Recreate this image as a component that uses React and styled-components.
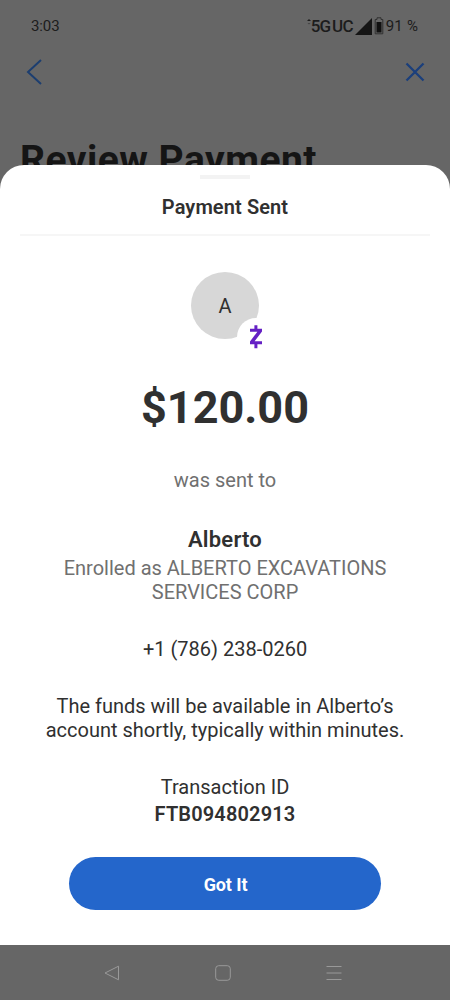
import React from "react";
import styled, { createGlobalStyle } from "styled-components";

const GlobalStyle = createGlobalStyle`
  html, body {
    margin: 0;
    padding: 0;
    background: #666;
  }

  * {
    box-sizing: border-box;
  }
`;

const Screen = styled.div`
  position: relative;
  display: flex;
  flex-direction: column;
  width: 450px;
  height: 1000px;
  overflow: hidden;
  background: #666;
  color: #303030;
  font-family: Roboto, "Liberation Sans", sans-serif;
`;

const StatusBar = styled.div`
  display: flex;
  align-items: center;
  justify-content: space-between;
  height: 52px;
  padding: 0 32px 0 31px;
  color: #1c1c1c;
  font-size: 15px;
`;

const Clock = styled.span`
  letter-spacing: -0.1px;
`;

const StatusIcons = styled.div`
  display: flex;
  align-items: center;
`;

const Network = styled.span`
  margin: 0 2px 0 0;
  font-size: 17px;
  font-weight: 500;
  letter-spacing: -0.7px;
  word-spacing: -2px;
`;

const Battery = styled.span`
  margin-left: 2px;
  font-size: 15px;
  word-spacing: 1px;
  letter-spacing: -0.1px;
`;

const TopBar = styled.div`
  display: flex;
  align-items: center;
  justify-content: space-between;
  height: 40px;
  padding: 0 25px 0 26px;
`;

const IconButton = styled.button`
  display: flex;
  padding: 0;
  border: 0;
  background: none;
`;

const PageTitle = styled.h1`
  margin: 44px 0 0 20px;
  color: #151515;
  font-size: 39px;
  font-weight: 700;
  line-height: 48px;
  letter-spacing: 0.48px;
  white-space: nowrap;
`;

const Sheet = styled.section`
  position: absolute;
  top: 165px;
  left: 0;
  right: 0;
  display: flex;
  flex-direction: column;
  align-items: center;
  height: 780px;
  background: #fff;
  border-radius: 24px 24px 0 0;
  text-align: center;
`;

const Handle = styled.div`
  width: 50px;
  height: 4px;
  margin-top: 10px;
  background: #f3f3f3;
`;

const SheetHeader = styled.h2`
  width: 410px;
  height: 57px;
  margin: 0;
  padding-top: 16px;
  border-bottom: 2px solid #f6f6f6;
  font-size: 20px;
  font-weight: 600;
  line-height: 24px;
  letter-spacing: 0.1px;
`;

const AvatarWrap = styled.div`
  position: relative;
  width: 68px;
  height: 67px;
  margin-top: 36px;
`;

const Avatar = styled.div`
  display: flex;
  align-items: center;
  justify-content: center;
  height: 100%;
  padding-top: 1px;
  border-radius: 50%;
  background: #d7d7d7;
  font-size: 20px;
`;

const Badge = styled.div`
  position: absolute;
  top: 46px;
  left: 46px;
  display: flex;
  align-items: center;
  justify-content: center;
  width: 38px;
  height: 38px;
  border-radius: 50%;
  background: #fff;
`;

const Line = styled.p`
  margin: ${(props) => props.$gap || 0}px 0 0;
  color: ${(props) => (props.$muted ? "#707070" : "#303030")};
  font-size: ${(props) => props.$size || 20}px;
  font-weight: ${(props) => props.$weight || 400};
  line-height: ${(props) => props.$leading || 24}px;
  letter-spacing: ${(props) => props.$spacing || 0}px;
  white-space: nowrap;
`;

const PrimaryButton = styled.button`
  width: 312px;
  height: 53px;
  margin-top: 31px;
  padding: 1px 0 0 1px;
  border: 0;
  border-radius: 27px;
  background: #2466cb;
  color: #fff;
  font-family: inherit;
  font-size: 18px;
  font-weight: 700;
  letter-spacing: -0.1px;
`;

const SystemNav = styled.nav`
  display: flex;
  align-items: center;
  gap: 95px;
  height: 55px;
  margin-top: auto;
  padding-left: 104px;
`;

const NavIcon = styled.svg`
  width: 16px;
  height: 16px;
  fill: none;
  stroke: #999;
  stroke-width: 1;
  stroke-linejoin: round;
`;

function App() {
  return (
    <>
      <GlobalStyle />
      <Screen>
        <StatusBar>
          <Clock>3:03</Clock>
          <StatusIcons>
            <svg width="4" height="16" viewBox="0 0 4 16">
              <path d="M0 3L2 1L4 3Z" fill="#1c1c1c" />
              <path d="M0.5 5L2 6.5L3.5 5Z" fill="#444" />
            </svg>
            <Network>5G UC</Network>
            <svg width="17" height="17" viewBox="0 0 17 17">
              <path d="M17 0V17H0Z" fill="#151515" />
            </svg>
            <svg width="12" height="18" viewBox="0 0 12 18">
              <path
                d="M5 0.8H9V2.5H10.8V16.8H3.2V2.5H5Z"
                fill="none"
                stroke="#303030"
                strokeWidth="1"
              />
              <rect x="4.5" y="5" width="5" height="10.5" fill="#111" />
            </svg>
            <Battery>91 %</Battery>
          </StatusIcons>
        </StatusBar>
        <TopBar>
          <IconButton aria-label="Back">
            <svg width="16" height="26" viewBox="0 0 16 26">
              <path d="M15 1L2 13L15 25" fill="none" stroke="#1c3e70" strokeWidth="2" />
            </svg>
          </IconButton>
          <IconButton aria-label="Close">
            <svg width="20" height="20" viewBox="0 0 20 20">
              <path d="M1.5 1.5L18.5 18.5M18.5 1.5L1.5 18.5" stroke="#1b3f7c" strokeWidth="2.3" />
            </svg>
          </IconButton>
        </TopBar>
        <PageTitle>Review Payment</PageTitle>

        <Sheet>
          <Handle />
          <SheetHeader>Payment Sent</SheetHeader>
          <AvatarWrap>
            <Avatar>A</Avatar>
            <Badge>
              <svg width="14" height="26" viewBox="0 0 14 26">
                <path
                  d="M1 4.7H13V7.6L5.6 17.3H13V20.3H8.4V24.3H5.4V20.3H1V17.4L8.4 7.7H1ZM5.4 1.3H8.4V5H5.4Z"
                  fill="#6420c4"
                />
              </svg>
            </Badge>
          </AvatarWrap>
          <Line $gap={42} $size={45} $weight={700} $leading={54}>$120.00</Line>
          <Line $gap={33} $muted>was sent to</Line>
          <Line $gap={36} $size={22} $weight={600} $spacing={0.2}>Alberto</Line>
          <Line $gap={4} $muted>
            Enrolled as ALBERTO EXCAVATIONS
            <br />
            SERVICES CORP
          </Line>
          <Line $gap={33}>+1 (786) 238-0260</Line>
          <Line $gap={33}>
            The funds will be available in Alberto’s
            <br />
            account shortly, typically within minutes.
          </Line>
          <Line $gap={33}>Transaction ID</Line>
          <Line $gap={3} $weight={600} $spacing={0.15}>FTB094802913</Line>
          <PrimaryButton>Got It</PrimaryButton>
        </Sheet>

        <SystemNav>
          <NavIcon viewBox="0 0 16 16">
            <path d="M14.5 1.2V14.8L1 8Z" />
          </NavIcon>
          <NavIcon viewBox="0 0 16 16">
            <rect x="0.7" y="0.7" width="14.6" height="14.6" rx="3" />
          </NavIcon>
          <NavIcon viewBox="0 0 16 16">
            <path d="M0.5 1.5H15.5M0.5 8H15.5M0.5 14.5H15.5" />
          </NavIcon>
        </SystemNav>
      </Screen>
    </>
  );
}

export default App;
